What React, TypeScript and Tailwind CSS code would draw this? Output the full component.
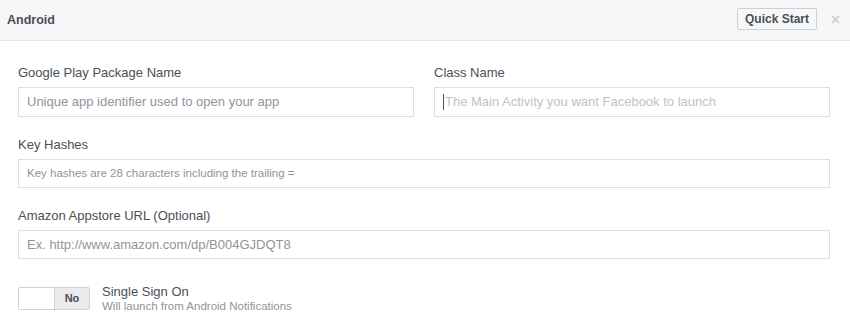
import { X } from "lucide-react";

const Field = ({
  label,
  placeholder,
  small,
  light,
  tall,
}: {
  label: string;
  placeholder: string;
  small?: boolean;
  light?: boolean;
  tall?: boolean;
}) => (
  <div className="flex flex-col">
    <label className="text-[13px] leading-[16px] text-[#4b4f56] mb-[6px]">{label}</label>
    <div className={`${tall ? "h-[30px]" : "h-[29px]"} border border-[#dddfe2] bg-white flex items-center px-[8px]`}>
      {light && <span className="w-px h-[16px] bg-[#4b4f56] mr-[1px]" />}
      <span className={`${small ? "text-[11.5px]" : "text-[13px]"} ${light ? "text-[#bec2c9]" : "text-[#90949c]"}`}>
        {placeholder}
      </span>
    </div>
  </div>
);

const App = () => {
  return (
    <div className="w-[850px] h-[331px] bg-white font-['Liberation_Sans',Helvetica,Arial,sans-serif] overflow-hidden">
      {/* Header */}
      <div className="h-[41px] bg-[#f5f6f7] border-b border-[#e5e5e5] flex items-center justify-between pl-[7px] pr-[8px]">
        <span className="text-[12.5px] font-bold text-[#4b4f56]">Android</span>
        <div className="flex items-center gap-[12px]">
          <button className="h-[22px] px-[7px] border border-[#ced0d4] bg-[#f6f7f9] rounded-[2px] text-[12px] font-bold text-[#4b4f56] -mt-[2px]">
            Quick Start
          </button>
          <X className="w-[13px] h-[13px] text-[#bec2c9] -mt-[2px]" strokeWidth={2} />
        </div>
      </div>

      {/* Body */}
      <div className="pt-[24px] pl-[18px] pr-[20px] flex flex-col gap-[20px]">
        <div className="grid grid-cols-2 gap-[20px]">
          <Field label="Google Play Package Name" placeholder="Unique app identifier used to open your app" tall />
          <Field label="Class Name" placeholder="The Main Activity you want Facebook to launch" light tall />
        </div>
        <Field label="Key Hashes" placeholder="Key hashes are 28 characters including the trailing =" small />
        <Field label="Amazon Appstore URL (Optional)" placeholder="Ex. http://www.amazon.com/dp/B004GJDQT8" />

        <div className="flex items-center gap-[12px] mt-[5px]">
          <div className="w-[72px] h-[23px] border border-[#ced0d4] rounded-[2px] flex overflow-hidden">
            <div className="flex-1 bg-white" />
            <div className="w-[35px] bg-[#e9ebee] border-l border-[#ced0d4] flex items-center justify-center text-[11px] font-bold text-[#4b4f56]">
              No
            </div>
          </div>
          <div className="flex flex-col">
            <span className="text-[13px] leading-[15px] text-[#4b4f56]">Single Sign On</span>
            <span className="text-[11.5px] leading-[14px] text-[#90949c]">Will launch from Android Notifications</span>
          </div>
        </div>
      </div>
    </div>
  );
};

export default App;
